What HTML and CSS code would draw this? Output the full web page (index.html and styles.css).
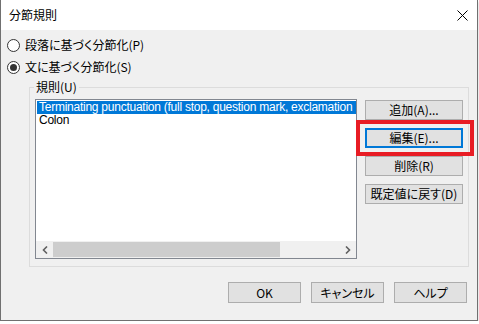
FILE: index.html
```html
<!DOCTYPE html>
<html lang="ja">
<head>
    <meta charset="UTF-8">
    <title>分節規則</title>
    <link rel="stylesheet" href="styles.css">
</head>
<body>
    <div class="dialog">
        <div class="titlebar">
            <span class="title">分節規則</span>
            <span class="close">
                <svg width="11" height="11" viewBox="0 0 11 11">
                    <path d="M0.5 0.5 L10.5 10.5 M10.5 0.5 L0.5 10.5" stroke="#000" stroke-width="1" fill="none"/>
                </svg>
            </span>
        </div>

        <div class="content">
            <label class="radio">
                <span class="radio-mark"></span>
                <span>段落に基づく分節化(P)</span>
            </label>
            <label class="radio checked">
                <span class="radio-mark"></span>
                <span>文に基づく分節化(S)</span>
            </label>

            <fieldset class="rules">
                <legend>規則(U)</legend>
                <div class="rules-row">
                    <div class="listbox">
                        <div class="items">
                            <div class="item selected">Terminating punctuation (full stop, question mark, exclamation</div>
                            <div class="item">Colon</div>
                        </div>
                        <div class="hscroll">
                            <span class="arrow">
                                <svg width="6" height="8" viewBox="0 0 6 8"><path d="M5 0.5 L1.5 4 L5 7.5" stroke="#606060" stroke-width="1.6" fill="none"/></svg>
                            </span>
                            <div class="track">
                                <div class="thumb" style="width: 227px"></div>
                            </div>
                            <span class="arrow">
                                <svg width="6" height="8" viewBox="0 0 6 8"><path d="M1 0.5 L4.5 4 L1 7.5" stroke="#606060" stroke-width="1.6" fill="none"/></svg>
                            </span>
                        </div>
                    </div>
                    <div class="side-buttons">
                        <button class="btn">追加(A)...</button>
                        <button class="btn focused">編集(E)...</button>
                        <button class="btn">削除(R)</button>
                        <button class="btn">既定値に戻す(D)</button>
                    </div>
                </div>
            </fieldset>

            <div class="footer">
                <button class="btn footer-btn">OK</button>
                <button class="btn footer-btn">キャンセル</button>
                <button class="btn footer-btn">ヘルプ</button>
            </div>
        </div>
    </div>
</body>
</html>
```

FILE: styles.css
```css
body {
    margin: 0;
    padding: 0;
    background: #ffffff;
    font-family: "Noto Sans CJK JP", "Liberation Sans", sans-serif;
    font-size: 12px;
    font-feature-settings: "palt";
    color: #000;
}

.dialog {
    width: 476px;
    height: 320px;
    background: #f0f0f0;
    border: 1px solid #707070;
    border-top: none;
    box-shadow: 0 2px 2px rgba(0, 0, 0, 0.25);
    display: flex;
    flex-direction: column;
}

/* タイトルバー */
.titlebar {
    height: 30px;
    background: #ffffff;
    display: flex;
    align-items: center;
    justify-content: space-between;
    padding: 0 9px 0 8px;
}

.title {
    font-size: 12px;
    line-height: 16px;
}

.close {
    display: flex;
    margin-top: 1px;
}

.content {
    flex: 1;
    display: flex;
    flex-direction: column;
}

/* ラジオボタン */
.radio {
    height: 22px;
    display: flex;
    align-items: center;
    gap: 5px;
    padding-left: 6px;
    line-height: 16px;
}

.radio:first-child {
    margin-top: 4px;
}

.radio-mark {
    width: 13px;
    height: 13px;
    box-sizing: border-box;
    border: 1px solid #333;
    border-radius: 50%;
    background: #fff;
    display: flex;
    align-items: center;
    justify-content: center;
}

.radio.checked .radio-mark::after {
    content: "";
    width: 7px;
    height: 7px;
    border-radius: 50%;
    background: #333;
}

/* 規則グループ */
.rules {
    margin: 1px 0 0 28px;
    width: 440px;
    box-sizing: border-box;
    border: 1px solid #dcdcdc;
    padding: 4px 5px 7px 5px;
}

.rules legend {
    padding: 0 2px;
    line-height: 16px;
    margin-left: -1px;
}

.rules-row {
    display: flex;
    gap: 8px;
}

.listbox {
    width: 322px;
    height: 160px;
    box-sizing: border-box;
    border: 1px solid #828790;
    background: #fff;
    display: flex;
    flex-direction: column;
    overflow: hidden;
}

.items {
    flex: 1;
    padding: 1px 0 0 1px;
    font-family: "Liberation Sans", "Noto Sans CJK JP", sans-serif;
    font-size: 12px;
    overflow: hidden;
}

.item {
    height: 13px;
    line-height: 13px;
    padding-left: 2px;
    white-space: nowrap;
    letter-spacing: -0.25px;
}

.item.selected {
    background: #0078d7;
    color: #fff;
}

.hscroll {
    height: 17px;
    background: #f0f0f0;
    display: flex;
    align-items: center;
}

.arrow {
    width: 17px;
    height: 17px;
    display: flex;
    align-items: center;
    justify-content: center;
}

.track {
    flex: 1;
    height: 100%;
    display: flex;
    align-items: center;
}

.thumb {
    height: 15px;
    background: #cdcdcd;
}

/* ボタン */
.btn {
    font-family: "Noto Sans CJK JP", "Liberation Sans", sans-serif;
    font-size: 12px;
    font-feature-settings: "palt";
    line-height: 16px;
    background: #e1e1e1;
    border: 1px solid #adadad;
    border-radius: 0;
    color: #000;
    padding: 0;
    margin: 0;
    box-sizing: border-box;
}

.side-buttons {
    width: 98px;
    display: flex;
    flex-direction: column;
    gap: 8px;
    padding-top: 1px;
}

.side-buttons .btn {
    height: 20px;
}

.btn.focused {
    border: 2px solid #0078d7;
    position: relative;
}

/* 注目枠 */
.btn.focused::after {
    content: "";
    position: absolute;
    left: -11px;
    right: -13px;
    top: -10px;
    bottom: -10px;
    border: 4px solid #e81c24;
}

.footer {
    display: flex;
    justify-content: flex-end;
    gap: 10px;
    margin-top: 15px;
    padding-right: 10px;
}

.footer-btn {
    width: 73px;
    height: 21px;
}
```
